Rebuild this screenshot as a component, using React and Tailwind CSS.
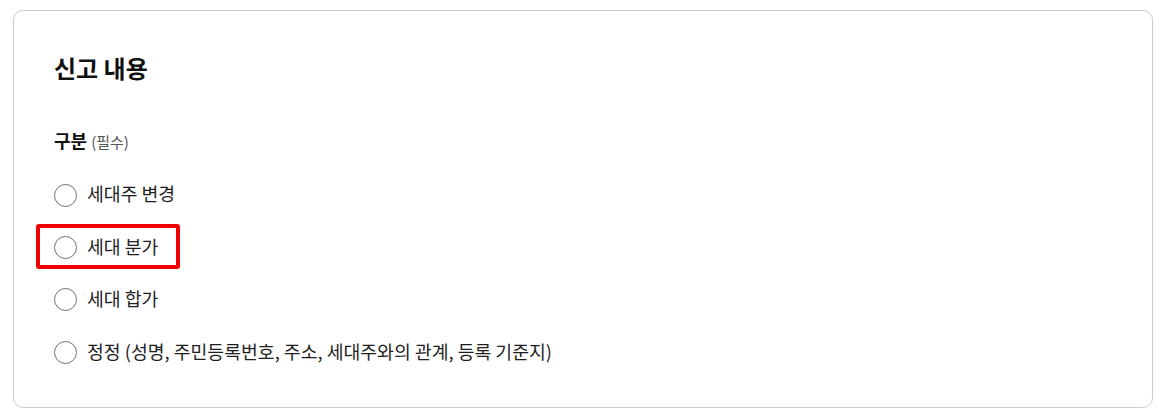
import React from 'react';

const options = [
  '세대주 변경',
  '세대 분가',
  '세대 합가',
  '정정 (성명, 주민등록번호, 주소, 세대주와의 관계, 등록 기준지)',
];

function RadioRow({ label, marked }) {
  return (
    <label className="relative flex items-center h-[52.4px] gap-[10px] cursor-pointer">
      <span className="w-[23px] h-[23px] rounded-full border border-[#707070] bg-white shrink-0"></span>
      <span className="relative -top-[1px] text-[18.3px] text-[#1e1e1e]">{label}</span>
      {marked && (
        <span className="absolute left-[-18px] top-[3px] w-[144px] h-[45px] border-4 border-[#ee0000] rounded-[3px] pointer-events-none"></span>
      )}
    </label>
  );
}

export default function App() {
  return (
    <div className="min-h-screen bg-white pt-[10px] pl-[13px] font-['Noto_Sans_CJK_KR','Noto_Sans',sans-serif] text-[#222]">
      <section className="w-[1140px] border border-[#cccccc] rounded-[10px] px-[40px] pt-[41px] pb-[28px]">
        <h2 className="text-[24px] leading-[32px] font-bold text-[#111]">신고 내용</h2>

        <div className="mt-[44px] leading-[24px]">
          <span className="text-[18px] font-bold text-[#111]">구분</span>
          <span className="ml-[4px] text-[15px] text-[#555]">(필수)</span>
        </div>

        <div className="mt-[15px] flex flex-col">
          {options.map((o, i) => (
            <RadioRow key={o} label={o} marked={i === 1} />
          ))}
        </div>
      </section>
    </div>
  );
}
